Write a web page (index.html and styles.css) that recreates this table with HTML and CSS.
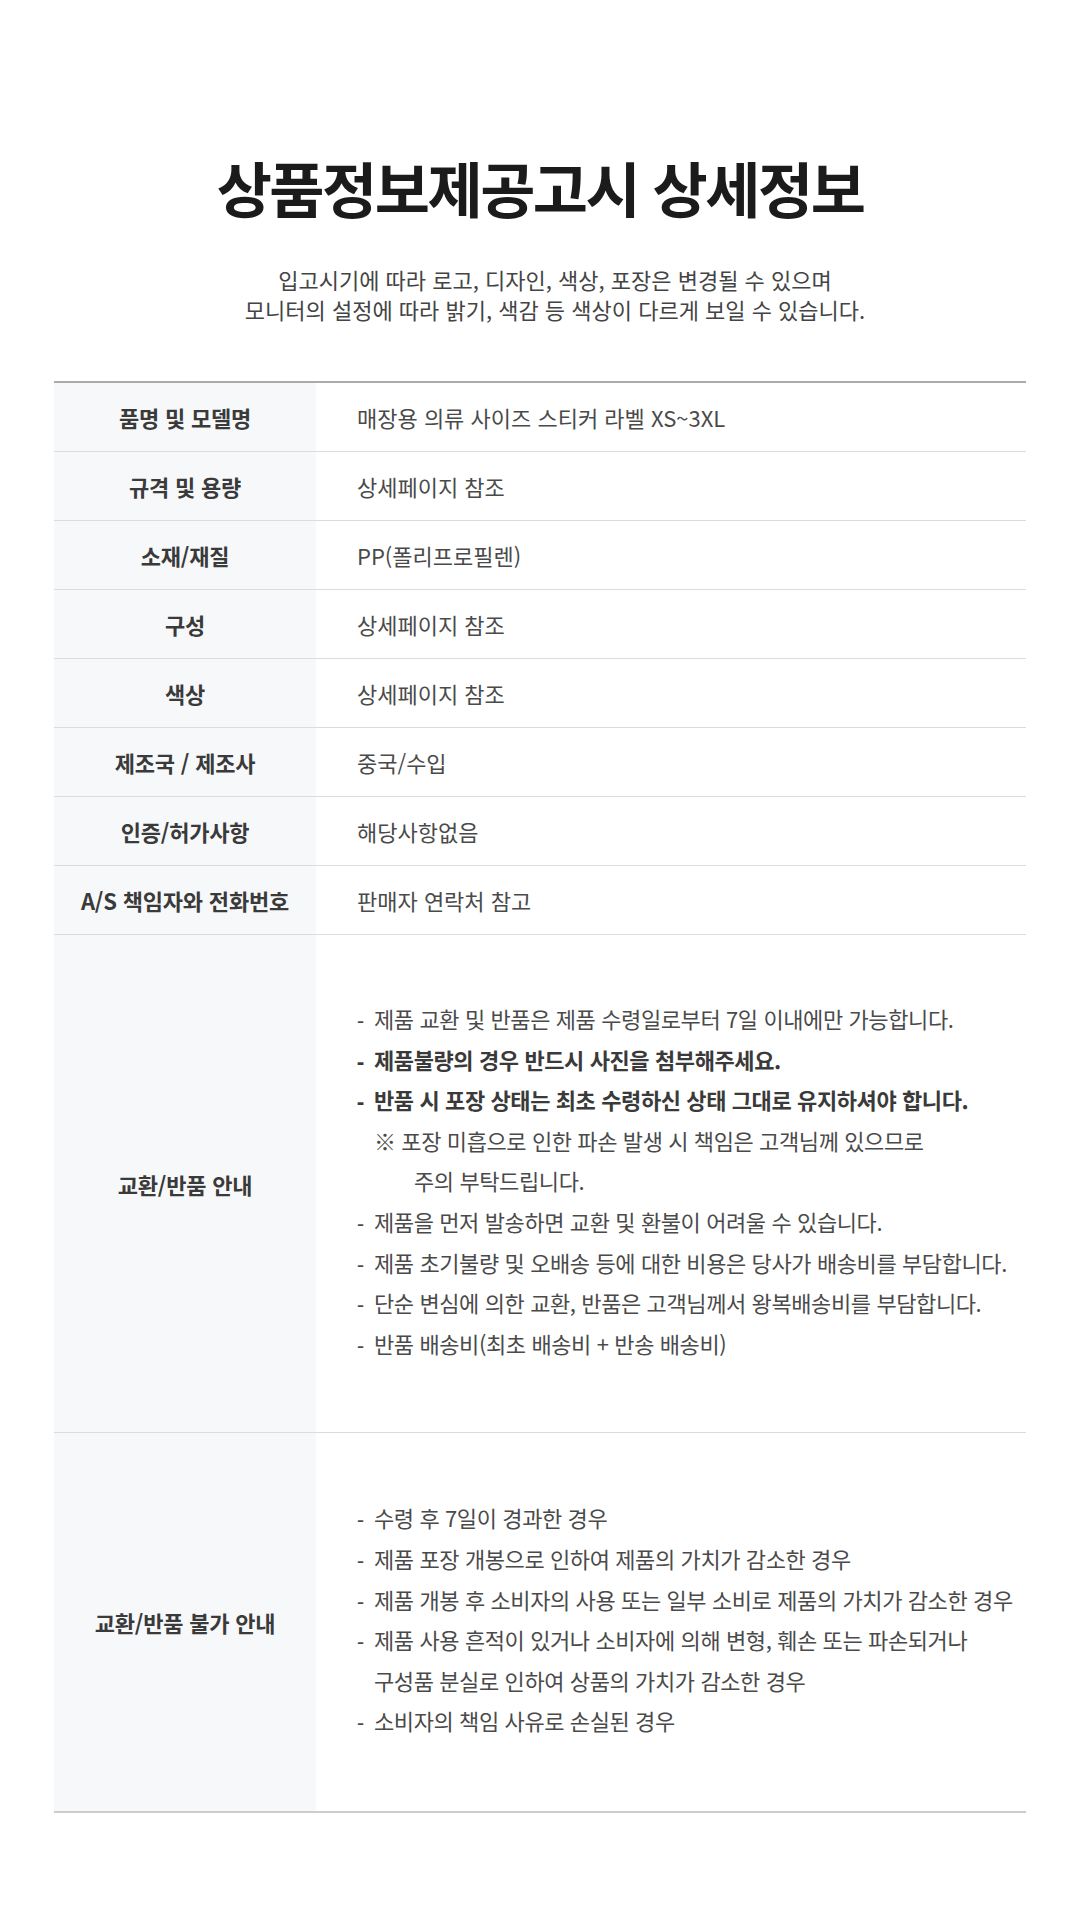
FILE: index.html
```html
<!DOCTYPE html>
<html lang="ko">
<head>
<meta charset="utf-8">
<title>상품정보제공고시 상세정보</title>
<link rel="stylesheet" href="styles.css">
</head>
<body>
<main class="page">
  <h1 class="title">상품정보제공고시 상세정보</h1>
  <p class="subtitle">입고시기에 따라 로고, 디자인, 색상, 포장은 변경될 수 있으며<br>모니터의 설정에 따라 밝기, 색감 등 색상이 다르게 보일 수 있습니다.</p>

  <section class="info">
    <div class="row">
      <div class="th">품명 및 모델명</div>
      <div class="td">매장용 의류 사이즈 스티커 라벨 XS~3XL</div>
    </div>
    <div class="row">
      <div class="th">규격 및 용량</div>
      <div class="td">상세페이지 참조</div>
    </div>
    <div class="row">
      <div class="th">소재/재질</div>
      <div class="td">PP(폴리프로필렌)</div>
    </div>
    <div class="row">
      <div class="th">구성</div>
      <div class="td">상세페이지 참조</div>
    </div>
    <div class="row">
      <div class="th">색상</div>
      <div class="td">상세페이지 참조</div>
    </div>
    <div class="row">
      <div class="th">제조국 / 제조사</div>
      <div class="td">중국/수입</div>
    </div>
    <div class="row">
      <div class="th">인증/허가사항</div>
      <div class="td">해당사항없음</div>
    </div>
    <div class="row">
      <div class="th">A/S 책임자와 전화번호</div>
      <div class="td">판매자 연락처 참고</div>
    </div>
    <div class="row row-long">
      <div class="th">교환/반품 안내</div>
      <div class="td">
        <ul class="notes notes-a">
          <li><span class="dash">-</span>제품 교환 및 반품은 제품 수령일로부터 7일 이내에만 가능합니다.</li>
          <li class="strong"><span class="dash">-</span>제품불량의 경우 반드시 사진을 첨부해주세요.</li>
          <li class="strong"><span class="dash">-</span>반품 시 포장 상태는 최초 수령하신 상태 그대로 유지하셔야 합니다.</li>
          <li class="indent">※ 포장 미흡으로 인한 파손 발생 시 책임은 고객님께 있으므로</li>
          <li class="indent2">주의 부탁드립니다.</li>
          <li><span class="dash">-</span>제품을 먼저 발송하면 교환 및 환불이 어려울 수 있습니다.</li>
          <li><span class="dash">-</span>제품 초기불량 및 오배송 등에 대한 비용은 당사가 배송비를 부담합니다.</li>
          <li><span class="dash">-</span>단순 변심에 의한 교환, 반품은 고객님께서 왕복배송비를 부담합니다.</li>
          <li><span class="dash">-</span>반품 배송비(최초 배송비 + 반송 배송비)</li>
        </ul>
      </div>
    </div>
    <div class="row row-long row-last">
      <div class="th">교환/반품 불가 안내</div>
      <div class="td">
        <ul class="notes notes-b">
          <li><span class="dash">-</span>수령 후 7일이 경과한 경우</li>
          <li><span class="dash">-</span>제품 포장 개봉으로 인하여 제품의 가치가 감소한 경우</li>
          <li><span class="dash">-</span>제품 개봉 후 소비자의 사용 또는 일부 소비로 제품의 가치가 감소한 경우</li>
          <li><span class="dash">-</span>제품 사용 흔적이 있거나 소비자에 의해 변형, 훼손 또는 파손되거나</li>
          <li class="indent">구성품 분실로 인하여 상품의 가치가 감소한 경우</li>
          <li><span class="dash">-</span>소비자의 책임 사유로 손실된 경우</li>
        </ul>
      </div>
    </div>
  </section>
</main>
</body>
</html>
```

FILE: styles.css
```css
* {
  box-sizing: border-box;
}

html, body {
  margin: 0;
  padding: 0;
  background: #ffffff;
}

body {
  font-family: "Noto Sans CJK KR", "Noto Sans", sans-serif;
  color: #444444;
}

.page {
  width: 1080px;
  padding-top: 151px;
  display: flex;
  flex-direction: column;
  align-items: center;
}

.title {
  margin: 0;
  font-size: 60px;
  line-height: 72px;
  font-weight: 700;
  letter-spacing: -2.5px;
  color: #1b1b1b;
  text-align: center;
}

.subtitle {
  margin: 41px 0 0 30px;
  font-size: 22px;
  line-height: 30px;
  letter-spacing: 0;
  color: #444444;
  text-align: center;
}

.info {
  width: 972px;
  margin-top: 57px;
  border-top: 2px solid #ababab;
  display: flex;
  flex-direction: column;
}

.row {
  display: flex;
  min-height: 69px;
  border-bottom: 1px solid #dcdcdc;
}

.row-last {
  border-bottom: 2px solid #cccccc;
}

.th {
  width: 262px;
  flex: none;
  background: #f7f8fa;
  display: flex;
  align-items: center;
  justify-content: center;
  font-size: 22px;
  font-weight: 700;
  letter-spacing: -0.2px;
  color: #3a3a3a;
}

.td {
  flex: 1;
  display: flex;
  align-items: center;
  padding-left: 41px;
  font-size: 22px;
  letter-spacing: 0;
  color: #4a4a4a;
}

.notes {
  list-style: none;
  margin: 0;
  padding: 63px 0 69px;
  line-height: 40.6px;
  letter-spacing: -0.4px;
}

.notes-b {
  padding: 64px 0 70px;
}

.notes li {
  white-space: nowrap;
}

.dash {
  display: inline-block;
  width: 17px;
  line-height: 1;
  font-family: "Noto Sans", sans-serif;
}

.strong {
  font-weight: 700;
  color: #3a3a3a;
}

.indent {
  padding-left: 17px;
}

.indent2 {
  padding-left: 57px;
}
```
